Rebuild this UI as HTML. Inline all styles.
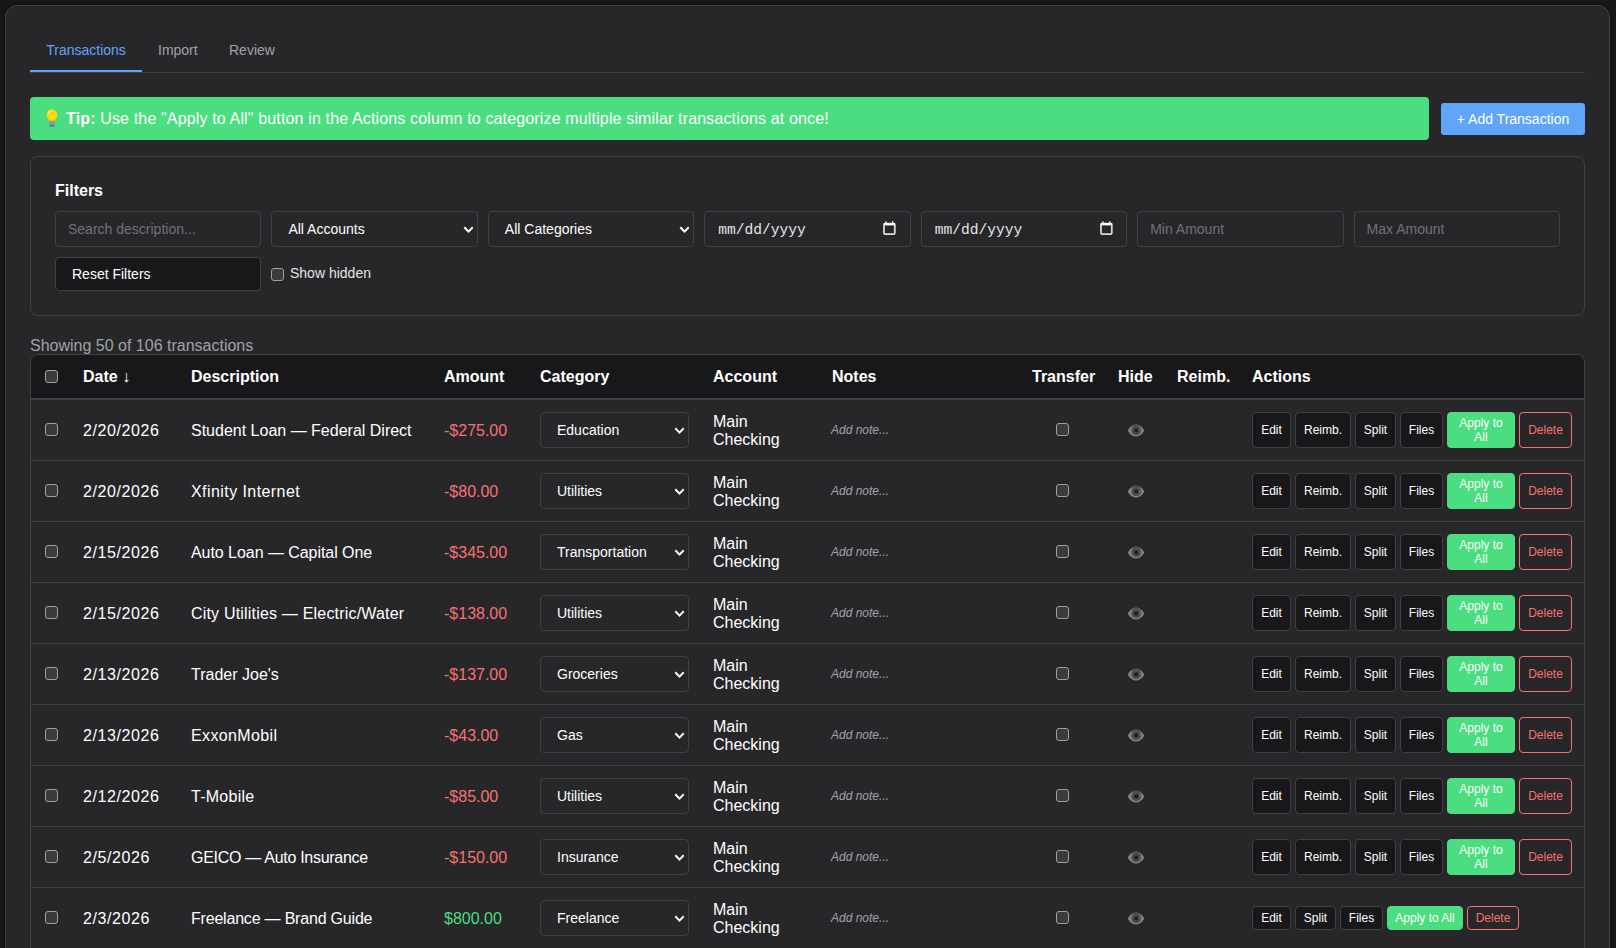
<!DOCTYPE html>
<html><head><meta charset="utf-8">
<style>
*{box-sizing:border-box;margin:0;padding:0}
html,body{width:1616px;height:948px;overflow:hidden;background:#18181b}
body{font-family:"Liberation Sans",sans-serif;color:#e4e4e7;position:relative}
.card{position:absolute;left:5px;top:5px;width:1605px;height:1200px;background:#27272a;border:1px solid #3f3f46;border-radius:12px;box-shadow:0 0 6px rgba(0,0,0,.4)}
.tabs{position:absolute;left:30px;top:30px;width:1555px;height:43px;border-bottom:1px solid #3f3f46}
.tab{position:absolute;top:0;height:42px;font-size:14px;color:#a1a1aa;line-height:40px;white-space:nowrap}
.tab.active{color:#60a5fa;border-bottom:2px solid #60a5fa}
.tip{position:absolute;left:30px;top:97px;width:1399px;height:43px;background:#4ade80;border-radius:4px;color:#fff;font-size:16px;line-height:43px;padding-left:36px;white-space:nowrap;letter-spacing:0.15px}
.bulb{position:absolute;left:16px;top:12px}
.addbtn{position:absolute;left:1441px;top:103px;width:144px;height:32px;background:#60a5fa;border-radius:3px;color:#fff;font-size:14px;line-height:32px;text-align:center}
.filters{position:absolute;left:30px;top:156px;width:1555px;height:160px;border:1px solid #3f3f46;border-radius:8px}
.ftitle{position:absolute;left:24px;top:25px;font-size:16px;font-weight:bold;color:#fff}
.inp{position:absolute;top:54px;height:36px;width:206.43px;border:1px solid #3f3f46;border-radius:4px;background:#27272a;font-size:14px;color:#71717a;line-height:34px;padding-left:12px;white-space:nowrap}
.inp.s{color:#fff;padding-left:16px}
.inp .chev{position:absolute;right:3px;top:14px}
.inp.d{font-family:"Liberation Mono",monospace;font-size:14.6px;color:#e4e4e7;padding-left:13px;line-height:37px}
.inp .cal{position:absolute;left:178px;top:9px}
.reset{position:absolute;left:24px;top:100px;width:206.43px;height:34px;background:#18181b;border:1px solid #3f3f46;border-radius:4px;color:#fff;font-size:14px;line-height:32px;padding-left:16px}
.cb{position:absolute;width:13px;height:13px;border:1px solid #a0a0a0;border-radius:3px;background:#3b3b3b}
.showh{position:absolute;left:259px;top:108px;font-size:14px;color:#e4e4e7;white-space:nowrap}
.count{position:absolute;left:30px;top:337px;font-size:16px;color:#a1a1aa;white-space:nowrap}
.table{position:absolute;left:30px;top:354px;width:1555px;height:700px;border:1px solid #3f3f46;border-radius:8px;overflow:hidden}
.thead{position:absolute;left:0;top:0;width:100%;height:45px;background:#18181b;border-bottom:2px solid #3f3f46}
.th{position:absolute;top:13px;font-size:16px;font-weight:bold;color:#fff;white-space:nowrap}
.row{position:absolute;left:0;width:100%;height:61px;border-bottom:1px solid #3f3f46}
.t{position:absolute;white-space:nowrap}
.date,.desc,.amt{top:22px;font-size:16px;color:#fff}
.date{left:52px;letter-spacing:0.6px}.desc{left:160px}.amt{left:413px}
.neg{color:#f87171}.pos{color:#4ade80}
.sel{position:absolute;left:509px;top:12px;width:149px;height:36px;border:1px solid #3f3f46;border-radius:4px;background:#27272a;font-size:14px;color:#fff;line-height:34px;padding-left:16px}
.sel .chev{position:absolute;right:3px;top:13.5px}
.acct{left:682px;top:13px;font-size:16px;line-height:18px;color:#fff}
.note{left:800px;top:23px;font-size:12px;font-style:italic;color:#a1a1aa}
.eye{position:absolute;left:1096px;top:23px;width:18px;height:13px}
.acts{position:absolute;left:1221px}
.acts.big{top:12px;height:36px}
.acts.small{top:18px;height:24px}
.b{position:absolute;top:0;height:100%;background:#18181b;border:1px solid #3f3f46;border-radius:4px;color:#fff;font-size:12px;text-align:center;display:flex;align-items:center;justify-content:center;line-height:14px}
.b.g{background:#4ade80;border-color:#4ade80}
.b.r{background:transparent;border-color:#f87171;color:#f87171}

</style></head><body>
<div class="card"></div>
<div class="tabs">
  <div class="tab active" style="left:0;width:112px;text-align:center">Transactions</div>
  <div class="tab" style="left:128px">Import</div>
  <div class="tab" style="left:199px">Review</div>
</div>
<div class="tip"><svg class="bulb" width="12" height="19" viewBox="0 0 12 19"><path d="M6 0.6C9.1 0.6 11.4 2.9 11.4 5.9C11.4 8.2 9.8 9.6 9.2 11.2L9 12.4H3L2.8 11.2C2.2 9.6 0.6 8.2 0.6 5.9C0.6 2.9 2.9 0.6 6 0.6Z" fill="#ffd500"/><path d="M2 5C2.2 3 3.6 1.7 5.3 1.5C4.3 2.5 3.3 4 2.9 5.6Z" fill="#fff59a"/><path d="M4.6 5.6C5 6.6 5.4 7.8 5.4 8.6M7.4 5.6C7 6.6 6.6 7.8 6.6 8.6" stroke="#ffe98a" stroke-width="0.8" fill="none"/><rect x="3.2" y="11.6" width="5.6" height="1" fill="#e89a10"/><path d="M3.1 12.5H8.9L8.6 16.8H3.4Z" fill="#6f9db2"/><path d="M3.4 16.3H8.6L8.3 17.6H3.7Z" fill="#3f7189"/></svg><b>Tip:</b> Use the "Apply to All" button in the Actions column to categorize multiple similar transactions at once!</div>
<div class="addbtn">+ Add Transaction</div>
<div class="filters">
  <div class="ftitle">Filters</div>
  <div class="inp" style="left:24.00px">Search description...</div>
  <div class="inp s" style="left:240.43px">All Accounts<svg class="chev" width="11" height="8" viewBox="0 0 11 8"><path d="M1.3 1.3 5.5 5.6 9.7 1.3" fill="none" stroke="#fff" stroke-width="2"/></svg></div>
  <div class="inp s" style="left:456.86px">All Categories<svg class="chev" width="11" height="8" viewBox="0 0 11 8"><path d="M1.3 1.3 5.5 5.6 9.7 1.3" fill="none" stroke="#fff" stroke-width="2"/></svg></div>
  <div class="inp d" style="left:673.29px">mm/dd/yyyy<svg class="cal" width="13" height="14" viewBox="0 0 13 14"><rect x="2.2" y="0.3" width="1.4" height="3" fill="#eee"/><rect x="9" y="0.3" width="1.4" height="3" fill="#eee"/><rect x="1" y="2.6" width="10.8" height="10.6" rx="1.2" fill="none" stroke="#ddd" stroke-width="1.7"/><rect x="0.6" y="2.2" width="11.6" height="2.2" fill="#fff"/></svg></div>
  <div class="inp d" style="left:889.72px">mm/dd/yyyy<svg class="cal" width="13" height="14" viewBox="0 0 13 14"><rect x="2.2" y="0.3" width="1.4" height="3" fill="#eee"/><rect x="9" y="0.3" width="1.4" height="3" fill="#eee"/><rect x="1" y="2.6" width="10.8" height="10.6" rx="1.2" fill="none" stroke="#ddd" stroke-width="1.7"/><rect x="0.6" y="2.2" width="11.6" height="2.2" fill="#fff"/></svg></div>
  <div class="inp" style="left:1106.15px">Min Amount</div>
  <div class="inp" style="left:1322.58px">Max Amount</div>
  <div class="reset">Reset Filters</div>
  <div class="cb" style="left:240px;top:111px"></div>
  <div class="showh">Show hidden</div>
</div>
<div class="count">Showing 50 of 106 transactions</div>
<div class="table">
  <div class="thead">
    <div class="cb" style="left:14px;top:15px"></div>
    <div class="th" style="left:52px">Date ↓</div>
    <div class="th" style="left:160px">Description</div>
    <div class="th" style="left:413px">Amount</div>
    <div class="th" style="left:509px">Category</div>
    <div class="th" style="left:682px">Account</div>
    <div class="th" style="left:801px">Notes</div>
    <div class="th" style="left:1001px">Transfer</div>
    <div class="th" style="left:1087px">Hide</div>
    <div class="th" style="left:1146px">Reimb.</div>
    <div class="th" style="left:1221px">Actions</div>
  </div>
<div class="row" style="top:45px">
<div class="cb" style="left:14px;top:23px"></div>
<div class="t date">2/20/2026</div>
<div class="t desc" style="letter-spacing:0px">Student Loan — Federal Direct</div>
<div class="t amt neg">-$275.00</div>
<div class="sel"><span>Education</span><svg class="chev" width="11" height="8" viewBox="0 0 11 8"><path d="M1.3 1.3 5.5 5.6 9.7 1.3" fill="none" stroke="#fff" stroke-width="2"/></svg></div>
<div class="t acct">Main<br>Checking</div>
<div class="t note">Add note...</div>
<div class="cb" style="left:1025px;top:23px"></div>
<div class="eye"><svg width="18" height="13" viewBox="0 0 17 13" preserveAspectRatio="none"><path d="M0.6 6.6 C2.6 2.6 5.6 0.6 8.5 0.6 C11.4 0.6 14.4 2.6 16.4 6.6 C14.4 10.6 11.4 12.6 8.5 12.6 C5.6 12.6 2.6 10.6 0.6 6.6Z" fill="#808184"/><path d="M3.2 3.2 C5 1.5 7 0.8 8.5 0.8 C10 0.8 12 1.5 13.8 3.2 C12 2.6 10 2.2 8.5 2.2 C7 2.2 5 2.6 3.2 3.2Z" fill="#4d4d50"/><circle cx="8.8" cy="6.4" r="4.7" fill="#5a4a40"/><circle cx="8.8" cy="6.4" r="2.2" fill="#212123"/><circle cx="12" cy="6.2" r="0.9" fill="#7a6a60"/></svg></div>
<div class="acts big"><div class="b" style="left:0;width:39px">Edit</div><div class="b" style="left:43px;width:56px">Reimb.</div><div class="b" style="left:103px;width:41px">Split</div><div class="b" style="left:148px;width:43px">Files</div><div class="b g" style="left:195px;width:68px">Apply to<br>All</div><div class="b r" style="left:267px;width:53px">Delete</div></div>
</div>
<div class="row" style="top:106px">
<div class="cb" style="left:14px;top:23px"></div>
<div class="t date">2/20/2026</div>
<div class="t desc" style="letter-spacing:0.43px">Xfinity Internet</div>
<div class="t amt neg">-$80.00</div>
<div class="sel"><span>Utilities</span><svg class="chev" width="11" height="8" viewBox="0 0 11 8"><path d="M1.3 1.3 5.5 5.6 9.7 1.3" fill="none" stroke="#fff" stroke-width="2"/></svg></div>
<div class="t acct">Main<br>Checking</div>
<div class="t note">Add note...</div>
<div class="cb" style="left:1025px;top:23px"></div>
<div class="eye"><svg width="18" height="13" viewBox="0 0 17 13" preserveAspectRatio="none"><path d="M0.6 6.6 C2.6 2.6 5.6 0.6 8.5 0.6 C11.4 0.6 14.4 2.6 16.4 6.6 C14.4 10.6 11.4 12.6 8.5 12.6 C5.6 12.6 2.6 10.6 0.6 6.6Z" fill="#808184"/><path d="M3.2 3.2 C5 1.5 7 0.8 8.5 0.8 C10 0.8 12 1.5 13.8 3.2 C12 2.6 10 2.2 8.5 2.2 C7 2.2 5 2.6 3.2 3.2Z" fill="#4d4d50"/><circle cx="8.8" cy="6.4" r="4.7" fill="#5a4a40"/><circle cx="8.8" cy="6.4" r="2.2" fill="#212123"/><circle cx="12" cy="6.2" r="0.9" fill="#7a6a60"/></svg></div>
<div class="acts big"><div class="b" style="left:0;width:39px">Edit</div><div class="b" style="left:43px;width:56px">Reimb.</div><div class="b" style="left:103px;width:41px">Split</div><div class="b" style="left:148px;width:43px">Files</div><div class="b g" style="left:195px;width:68px">Apply to<br>All</div><div class="b r" style="left:267px;width:53px">Delete</div></div>
</div>
<div class="row" style="top:167px">
<div class="cb" style="left:14px;top:23px"></div>
<div class="t date">2/15/2026</div>
<div class="t desc" style="letter-spacing:-0.05px">Auto Loan — Capital One</div>
<div class="t amt neg">-$345.00</div>
<div class="sel"><span>Transportation</span><svg class="chev" width="11" height="8" viewBox="0 0 11 8"><path d="M1.3 1.3 5.5 5.6 9.7 1.3" fill="none" stroke="#fff" stroke-width="2"/></svg></div>
<div class="t acct">Main<br>Checking</div>
<div class="t note">Add note...</div>
<div class="cb" style="left:1025px;top:23px"></div>
<div class="eye"><svg width="18" height="13" viewBox="0 0 17 13" preserveAspectRatio="none"><path d="M0.6 6.6 C2.6 2.6 5.6 0.6 8.5 0.6 C11.4 0.6 14.4 2.6 16.4 6.6 C14.4 10.6 11.4 12.6 8.5 12.6 C5.6 12.6 2.6 10.6 0.6 6.6Z" fill="#808184"/><path d="M3.2 3.2 C5 1.5 7 0.8 8.5 0.8 C10 0.8 12 1.5 13.8 3.2 C12 2.6 10 2.2 8.5 2.2 C7 2.2 5 2.6 3.2 3.2Z" fill="#4d4d50"/><circle cx="8.8" cy="6.4" r="4.7" fill="#5a4a40"/><circle cx="8.8" cy="6.4" r="2.2" fill="#212123"/><circle cx="12" cy="6.2" r="0.9" fill="#7a6a60"/></svg></div>
<div class="acts big"><div class="b" style="left:0;width:39px">Edit</div><div class="b" style="left:43px;width:56px">Reimb.</div><div class="b" style="left:103px;width:41px">Split</div><div class="b" style="left:148px;width:43px">Files</div><div class="b g" style="left:195px;width:68px">Apply to<br>All</div><div class="b r" style="left:267px;width:53px">Delete</div></div>
</div>
<div class="row" style="top:228px">
<div class="cb" style="left:14px;top:23px"></div>
<div class="t date">2/15/2026</div>
<div class="t desc" style="letter-spacing:0.19px">City Utilities — Electric/Water</div>
<div class="t amt neg">-$138.00</div>
<div class="sel"><span>Utilities</span><svg class="chev" width="11" height="8" viewBox="0 0 11 8"><path d="M1.3 1.3 5.5 5.6 9.7 1.3" fill="none" stroke="#fff" stroke-width="2"/></svg></div>
<div class="t acct">Main<br>Checking</div>
<div class="t note">Add note...</div>
<div class="cb" style="left:1025px;top:23px"></div>
<div class="eye"><svg width="18" height="13" viewBox="0 0 17 13" preserveAspectRatio="none"><path d="M0.6 6.6 C2.6 2.6 5.6 0.6 8.5 0.6 C11.4 0.6 14.4 2.6 16.4 6.6 C14.4 10.6 11.4 12.6 8.5 12.6 C5.6 12.6 2.6 10.6 0.6 6.6Z" fill="#808184"/><path d="M3.2 3.2 C5 1.5 7 0.8 8.5 0.8 C10 0.8 12 1.5 13.8 3.2 C12 2.6 10 2.2 8.5 2.2 C7 2.2 5 2.6 3.2 3.2Z" fill="#4d4d50"/><circle cx="8.8" cy="6.4" r="4.7" fill="#5a4a40"/><circle cx="8.8" cy="6.4" r="2.2" fill="#212123"/><circle cx="12" cy="6.2" r="0.9" fill="#7a6a60"/></svg></div>
<div class="acts big"><div class="b" style="left:0;width:39px">Edit</div><div class="b" style="left:43px;width:56px">Reimb.</div><div class="b" style="left:103px;width:41px">Split</div><div class="b" style="left:148px;width:43px">Files</div><div class="b g" style="left:195px;width:68px">Apply to<br>All</div><div class="b r" style="left:267px;width:53px">Delete</div></div>
</div>
<div class="row" style="top:289px">
<div class="cb" style="left:14px;top:23px"></div>
<div class="t date">2/13/2026</div>
<div class="t desc" style="letter-spacing:0px">Trader Joe's</div>
<div class="t amt neg">-$137.00</div>
<div class="sel"><span>Groceries</span><svg class="chev" width="11" height="8" viewBox="0 0 11 8"><path d="M1.3 1.3 5.5 5.6 9.7 1.3" fill="none" stroke="#fff" stroke-width="2"/></svg></div>
<div class="t acct">Main<br>Checking</div>
<div class="t note">Add note...</div>
<div class="cb" style="left:1025px;top:23px"></div>
<div class="eye"><svg width="18" height="13" viewBox="0 0 17 13" preserveAspectRatio="none"><path d="M0.6 6.6 C2.6 2.6 5.6 0.6 8.5 0.6 C11.4 0.6 14.4 2.6 16.4 6.6 C14.4 10.6 11.4 12.6 8.5 12.6 C5.6 12.6 2.6 10.6 0.6 6.6Z" fill="#808184"/><path d="M3.2 3.2 C5 1.5 7 0.8 8.5 0.8 C10 0.8 12 1.5 13.8 3.2 C12 2.6 10 2.2 8.5 2.2 C7 2.2 5 2.6 3.2 3.2Z" fill="#4d4d50"/><circle cx="8.8" cy="6.4" r="4.7" fill="#5a4a40"/><circle cx="8.8" cy="6.4" r="2.2" fill="#212123"/><circle cx="12" cy="6.2" r="0.9" fill="#7a6a60"/></svg></div>
<div class="acts big"><div class="b" style="left:0;width:39px">Edit</div><div class="b" style="left:43px;width:56px">Reimb.</div><div class="b" style="left:103px;width:41px">Split</div><div class="b" style="left:148px;width:43px">Files</div><div class="b g" style="left:195px;width:68px">Apply to<br>All</div><div class="b r" style="left:267px;width:53px">Delete</div></div>
</div>
<div class="row" style="top:350px">
<div class="cb" style="left:14px;top:23px"></div>
<div class="t date">2/13/2026</div>
<div class="t desc" style="letter-spacing:0.36px">ExxonMobil</div>
<div class="t amt neg">-$43.00</div>
<div class="sel"><span>Gas</span><svg class="chev" width="11" height="8" viewBox="0 0 11 8"><path d="M1.3 1.3 5.5 5.6 9.7 1.3" fill="none" stroke="#fff" stroke-width="2"/></svg></div>
<div class="t acct">Main<br>Checking</div>
<div class="t note">Add note...</div>
<div class="cb" style="left:1025px;top:23px"></div>
<div class="eye"><svg width="18" height="13" viewBox="0 0 17 13" preserveAspectRatio="none"><path d="M0.6 6.6 C2.6 2.6 5.6 0.6 8.5 0.6 C11.4 0.6 14.4 2.6 16.4 6.6 C14.4 10.6 11.4 12.6 8.5 12.6 C5.6 12.6 2.6 10.6 0.6 6.6Z" fill="#808184"/><path d="M3.2 3.2 C5 1.5 7 0.8 8.5 0.8 C10 0.8 12 1.5 13.8 3.2 C12 2.6 10 2.2 8.5 2.2 C7 2.2 5 2.6 3.2 3.2Z" fill="#4d4d50"/><circle cx="8.8" cy="6.4" r="4.7" fill="#5a4a40"/><circle cx="8.8" cy="6.4" r="2.2" fill="#212123"/><circle cx="12" cy="6.2" r="0.9" fill="#7a6a60"/></svg></div>
<div class="acts big"><div class="b" style="left:0;width:39px">Edit</div><div class="b" style="left:43px;width:56px">Reimb.</div><div class="b" style="left:103px;width:41px">Split</div><div class="b" style="left:148px;width:43px">Files</div><div class="b g" style="left:195px;width:68px">Apply to<br>All</div><div class="b r" style="left:267px;width:53px">Delete</div></div>
</div>
<div class="row" style="top:411px">
<div class="cb" style="left:14px;top:23px"></div>
<div class="t date">2/12/2026</div>
<div class="t desc" style="letter-spacing:0.27px">T-Mobile</div>
<div class="t amt neg">-$85.00</div>
<div class="sel"><span>Utilities</span><svg class="chev" width="11" height="8" viewBox="0 0 11 8"><path d="M1.3 1.3 5.5 5.6 9.7 1.3" fill="none" stroke="#fff" stroke-width="2"/></svg></div>
<div class="t acct">Main<br>Checking</div>
<div class="t note">Add note...</div>
<div class="cb" style="left:1025px;top:23px"></div>
<div class="eye"><svg width="18" height="13" viewBox="0 0 17 13" preserveAspectRatio="none"><path d="M0.6 6.6 C2.6 2.6 5.6 0.6 8.5 0.6 C11.4 0.6 14.4 2.6 16.4 6.6 C14.4 10.6 11.4 12.6 8.5 12.6 C5.6 12.6 2.6 10.6 0.6 6.6Z" fill="#808184"/><path d="M3.2 3.2 C5 1.5 7 0.8 8.5 0.8 C10 0.8 12 1.5 13.8 3.2 C12 2.6 10 2.2 8.5 2.2 C7 2.2 5 2.6 3.2 3.2Z" fill="#4d4d50"/><circle cx="8.8" cy="6.4" r="4.7" fill="#5a4a40"/><circle cx="8.8" cy="6.4" r="2.2" fill="#212123"/><circle cx="12" cy="6.2" r="0.9" fill="#7a6a60"/></svg></div>
<div class="acts big"><div class="b" style="left:0;width:39px">Edit</div><div class="b" style="left:43px;width:56px">Reimb.</div><div class="b" style="left:103px;width:41px">Split</div><div class="b" style="left:148px;width:43px">Files</div><div class="b g" style="left:195px;width:68px">Apply to<br>All</div><div class="b r" style="left:267px;width:53px">Delete</div></div>
</div>
<div class="row" style="top:472px">
<div class="cb" style="left:14px;top:23px"></div>
<div class="t date">2/5/2026</div>
<div class="t desc" style="letter-spacing:-0.29px">GEICO — Auto Insurance</div>
<div class="t amt neg">-$150.00</div>
<div class="sel"><span>Insurance</span><svg class="chev" width="11" height="8" viewBox="0 0 11 8"><path d="M1.3 1.3 5.5 5.6 9.7 1.3" fill="none" stroke="#fff" stroke-width="2"/></svg></div>
<div class="t acct">Main<br>Checking</div>
<div class="t note">Add note...</div>
<div class="cb" style="left:1025px;top:23px"></div>
<div class="eye"><svg width="18" height="13" viewBox="0 0 17 13" preserveAspectRatio="none"><path d="M0.6 6.6 C2.6 2.6 5.6 0.6 8.5 0.6 C11.4 0.6 14.4 2.6 16.4 6.6 C14.4 10.6 11.4 12.6 8.5 12.6 C5.6 12.6 2.6 10.6 0.6 6.6Z" fill="#808184"/><path d="M3.2 3.2 C5 1.5 7 0.8 8.5 0.8 C10 0.8 12 1.5 13.8 3.2 C12 2.6 10 2.2 8.5 2.2 C7 2.2 5 2.6 3.2 3.2Z" fill="#4d4d50"/><circle cx="8.8" cy="6.4" r="4.7" fill="#5a4a40"/><circle cx="8.8" cy="6.4" r="2.2" fill="#212123"/><circle cx="12" cy="6.2" r="0.9" fill="#7a6a60"/></svg></div>
<div class="acts big"><div class="b" style="left:0;width:39px">Edit</div><div class="b" style="left:43px;width:56px">Reimb.</div><div class="b" style="left:103px;width:41px">Split</div><div class="b" style="left:148px;width:43px">Files</div><div class="b g" style="left:195px;width:68px">Apply to<br>All</div><div class="b r" style="left:267px;width:53px">Delete</div></div>
</div>
<div class="row" style="top:533px">
<div class="cb" style="left:14px;top:23px"></div>
<div class="t date">2/3/2026</div>
<div class="t desc" style="letter-spacing:-0.2px">Freelance — Brand Guide</div>
<div class="t amt pos">$800.00</div>
<div class="sel"><span>Freelance</span><svg class="chev" width="11" height="8" viewBox="0 0 11 8"><path d="M1.3 1.3 5.5 5.6 9.7 1.3" fill="none" stroke="#fff" stroke-width="2"/></svg></div>
<div class="t acct">Main<br>Checking</div>
<div class="t note">Add note...</div>
<div class="cb" style="left:1025px;top:23px"></div>
<div class="eye"><svg width="18" height="13" viewBox="0 0 17 13" preserveAspectRatio="none"><path d="M0.6 6.6 C2.6 2.6 5.6 0.6 8.5 0.6 C11.4 0.6 14.4 2.6 16.4 6.6 C14.4 10.6 11.4 12.6 8.5 12.6 C5.6 12.6 2.6 10.6 0.6 6.6Z" fill="#808184"/><path d="M3.2 3.2 C5 1.5 7 0.8 8.5 0.8 C10 0.8 12 1.5 13.8 3.2 C12 2.6 10 2.2 8.5 2.2 C7 2.2 5 2.6 3.2 3.2Z" fill="#4d4d50"/><circle cx="8.8" cy="6.4" r="4.7" fill="#5a4a40"/><circle cx="8.8" cy="6.4" r="2.2" fill="#212123"/><circle cx="12" cy="6.2" r="0.9" fill="#7a6a60"/></svg></div>
<div class="acts small"><div class="b" style="left:0;width:39px">Edit</div><div class="b" style="left:43px;width:41px">Split</div><div class="b" style="left:88px;width:43px">Files</div><div class="b g" style="left:135px;width:76px">Apply to All</div><div class="b r" style="left:215px;width:52px">Delete</div></div>
</div>
</div>
</body></html>
